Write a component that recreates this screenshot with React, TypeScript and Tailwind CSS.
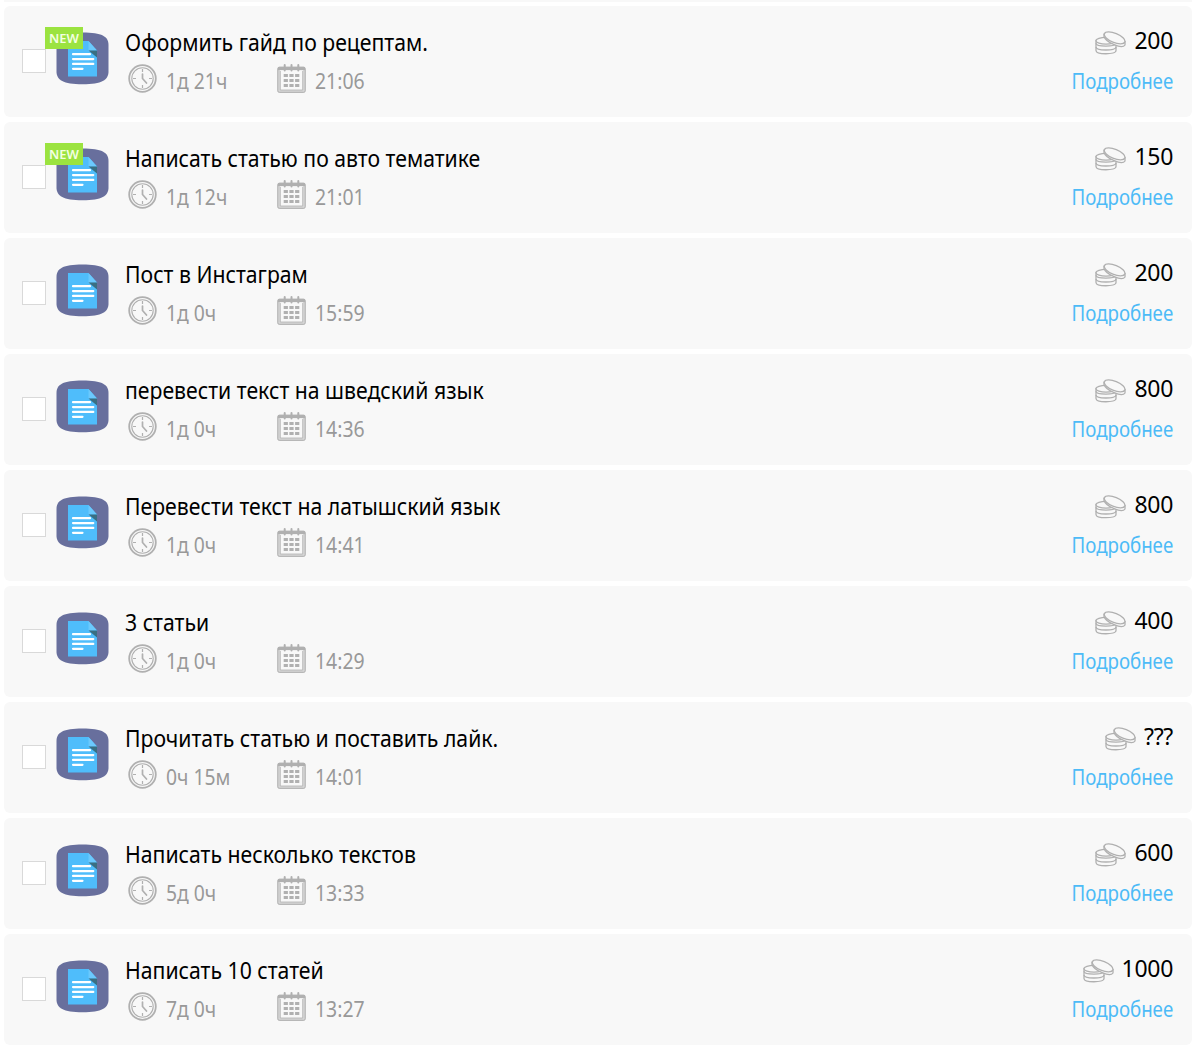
interface Task {
  title: string;
  left: string;
  time: string;
  price: string;
  isNew?: boolean;
}

const tasks: Task[] = [
  { title: "Оформить гайд по рецептам.", left: "1д 21ч", time: "21:06", price: "200", isNew: true },
  { title: "Написать статью по авто тематике", left: "1д 12ч", time: "21:01", price: "150", isNew: true },
  { title: "Пост в Инстаграм", left: "1д 0ч", time: "15:59", price: "200" },
  { title: "перевести текст на шведский язык", left: "1д 0ч", time: "14:36", price: "800" },
  { title: "Перевести текст на латышский язык", left: "1д 0ч", time: "14:41", price: "800" },
  { title: "3 статьи", left: "1д 0ч", time: "14:29", price: "400" },
  { title: "Прочитать статью и поставить лайк.", left: "0ч 15м", time: "14:01", price: "???" },
  { title: "Написать несколько текстов", left: "5д 0ч", time: "13:33", price: "600" },
  { title: "Написать 10 статей", left: "7д 0ч", time: "13:27", price: "1000" },
];

function DocumentIcon() {
  return (
    <svg width="53" height="53" viewBox="0 0 53 53">
      <path d="M0.500 13C0.500 4.500 7 0.500 26.500 0.500C46 0.500 52.500 4.500 52.500 13V39.500C52.500 48 46 52.300 26.500 52.300C7 52.300 0.500 48 0.500 39.500Z" fill="#686f9d" />
      <path d="M12 9H32.500L41 18.500V44.500H12Z" fill="#4fbdfb" />
      <path d="M32.500 9L41 18.500H32.500Z" fill="#6bc9fd" />
      <path d="M32.500 18.500H41V25.500Z" fill="#3a6f82" />
      <path d="M17 22.200H34M17 27.100H37.300M17 31.900H37.300M17 36.800H26.500" stroke="#fff" strokeWidth="2.200" strokeLinecap="round" />
    </svg>
  );
}

function ClockIcon() {
  return (
    <svg width="29" height="29" viewBox="0 0 29 29" fill="none" stroke="#b0b0b0">
      <circle cx="14.500" cy="14.500" r="13.300" strokeWidth="1.800" />
      <circle cx="14.500" cy="14.500" r="10.700" strokeWidth="1.100" />
      <path d="M14.500 5V8M14.500 21V24M5 14.500H8M21 14.500H24" strokeWidth="1.200" />
      <path d="M14.500 10V14.500L18.500 19" strokeWidth="1.700" strokeLinecap="round" />
    </svg>
  );
}

function CalendarIcon() {
  return (
    <svg width="29" height="29" viewBox="0 0 29 29" fill="none" stroke="#b0b0b0">
      <rect x="1.800" y="3.800" width="25.400" height="23.700" rx="1" strokeWidth="2.800" stroke="#d6d6d6" />
      <rect x="0.800" y="3.300" width="27.400" height="25" rx="1.500" strokeWidth="1" />
      <path d="M3.300 7V26H25.700V7" strokeWidth="0.800" />
      <path d="M1 4.600H28" strokeWidth="3" />
      <path d="M7.700 1V6.500M14.500 1V6.500M21.300 1V6.500" strokeWidth="2" strokeLinecap="round" />
      <path d="M6.700 11.500H22.500M6.700 16.500H22.500M6.700 21.500H22.500" strokeWidth="3" strokeDasharray="4.200 1.500" />
    </svg>
  );
}

function CoinsIcon() {
  return (
    <svg width="31" height="24" viewBox="0 0 31 24" fill="#f8f8f8" stroke="#b0b0b0" strokeWidth="1.300">
      <path d="M1 9.500V19.500C1 23.800 21 23.800 21 19.500V9.500Z" />
      <path d="M1 12.200C1 16 21 16 21 12.200M1 16C1 20 21 20 21 16" fill="none" />
      <ellipse cx="11" cy="9.800" rx="10" ry="3.400" />
      <path d="M9 3.500V5.500C11 11.500 27 18.500 30 14V10.500Z" />
      <ellipse cx="19.600" cy="6.900" rx="11" ry="4.600" transform="rotate(22 19.600 6.900)" />
    </svg>
  );
}

function TaskRow({ task }: { task: Task }) {
  return (
    <div className="flex h-[111px] rounded-md bg-[#f8f8f8] pl-[18px] pr-[19px]">
      <div className="mt-[43px] h-6 w-6 shrink-0 border border-[#d9d9d9] bg-white" />

      <div className="relative ml-2.5 mt-[26px] h-[53px] w-[53px] shrink-0">
        <DocumentIcon />
        {task.isNew && (
          <span className="absolute -left-[11px] -top-[5px] h-[22px] w-[38px] bg-[#9be340] text-center text-[13px] font-semibold leading-[22px] text-[#f3ffe2]">
            NEW
          </span>
        )}
      </div>

      <div className="ml-4 flex-1">
        <div className="mt-5 h-8 origin-left scale-x-[0.922] whitespace-nowrap text-[23px] leading-8 text-black">
          {task.title}
        </div>
        <div className="ml-[3px] mt-1.5 flex text-[21px] leading-[29px] text-[#999]">
          <ClockIcon />
          <span className="ml-[9px] w-[111px] origin-left scale-x-[0.92] pt-[3px]">{task.left}</span>
          <CalendarIcon />
          <span className="ml-[9px] origin-left scale-x-[0.925] pt-[3px]">{task.time}</span>
        </div>
      </div>

      <div className="flex flex-col items-end">
        <div className="mt-[18px] flex h-8 text-[23px] leading-8 tracking-[-0.3px] text-black">
          <span className="mr-2 mt-[7px]">
            <CoinsIcon />
          </span>
          <span>{task.price}</span>
        </div>
        <a href="#" className="mt-[11px] origin-right scale-x-[0.89] text-[21px] leading-[29px] text-[#4dbbf7]">
          Подробнее
        </a>
      </div>
    </div>
  );
}

export default function App() {
  return (
    <div className="h-[1050px] overflow-hidden bg-white pl-1 pr-2 font-['Noto_Sans','Liberation_Sans',sans-serif]">
      <div className="h-0.5 bg-[#f8f8f8]" />
      <div className="mt-1 flex flex-col gap-[5px]">
        {tasks.map((task) => (
          <TaskRow key={task.title} task={task} />
        ))}
      </div>
    </div>
  );
}
